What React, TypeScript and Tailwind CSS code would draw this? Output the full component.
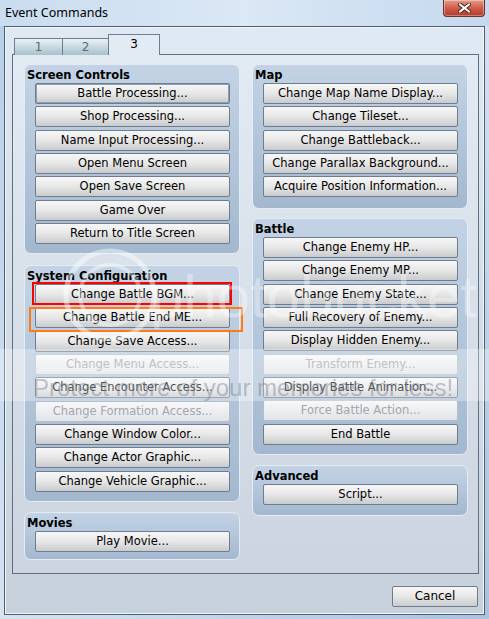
import React from "react";

type Btn = { label: string; off?: boolean; focus?: boolean };

const screenControls: Btn[] = [
  { label: "Battle Processing...", focus: true },
  { label: "Shop Processing..." },
  { label: "Name Input Processing..." },
  { label: "Open Menu Screen" },
  { label: "Open Save Screen" },
  { label: "Game Over" },
  { label: "Return to Title Screen" },
];

const systemConfig: Btn[] = [
  { label: "Change Battle BGM..." },
  { label: "Change Battle End ME..." },
  { label: "Change Save Access..." },
  { label: "Change Menu Access...", off: true },
  { label: "Change Encounter Access..." },
  { label: "Change Formation Access...", off: true },
  { label: "Change Window Color..." },
  { label: "Change Actor Graphic..." },
  { label: "Change Vehicle Graphic..." },
];

const mapCmds: Btn[] = [
  { label: "Change Map Name Display..." },
  { label: "Change Tileset..." },
  { label: "Change Battleback..." },
  { label: "Change Parallax Background..." },
  { label: "Acquire Position Information..." },
];

const battleCmds: Btn[] = [
  { label: "Change Enemy HP..." },
  { label: "Change Enemy MP..." },
  { label: "Change Enemy State..." },
  { label: "Full Recovery of Enemy..." },
  { label: "Display Hidden Enemy..." },
  { label: "Transform Enemy...", off: true },
  { label: "Display Battle Animation..." },
  { label: "Force Battle Action...", off: true },
  { label: "End Battle" },
];

const CmdButton: React.FC<{ b: Btn }> = ({ b }) => {
  const base =
    "h-[21px] w-full shrink-0 rounded-[2px] border text-center text-[11.5px] leading-[19px] whitespace-nowrap bg-gradient-to-b";
  if (b.off) {
    return (
      <div className={`${base} border-[#b4bfcc] from-[#f8f8f8] to-[#e1e4e8] text-[#a2a7ad]`}>
        {b.label}
      </div>
    );
  }
  return (
    <div
      className={`${base} border-[#6f7c8d] from-[#f7f7f7] via-[#e7e7e7] to-[#c9cbce] text-black ${
        b.focus ? "shadow-[inset_0_0_0_1px_#8c9fb6]" : ""
      }`}
    >
      {b.label}
    </div>
  );
};

const Group: React.FC<{ title: string; h: string; items: Btn[] }> = ({ title, h, items }) => (
  <div
    className={`${h} shrink-0 rounded-[7px] border border-[#e3ebf4] bg-gradient-to-b from-[#c3d3e5] to-[#a3b8cf] pl-[10px] pr-[9px] pt-[3px]`}
  >
    <div className="-ml-[8px] h-[15px] text-[11.5px] font-bold leading-[15px] text-black">{title}</div>
    <div className="flex flex-col gap-[2.35px]">
      {items.map((b) => (
        <CmdButton key={b.label} b={b} />
      ))}
    </div>
  </div>
);

export default function App() {
  return (
    <div
      className="relative h-[619px] w-[489px] overflow-hidden bg-gradient-to-br from-[#b7cfe9] via-[#d5e3f2] to-[#a9c3df]"
      style={{ fontFamily: '"DejaVu Sans", Verdana, sans-serif' }}
    >
      {/* title bar */}
      <div className="flex h-[26px] items-start justify-between bg-gradient-to-r from-[#c9dcf0] via-[#dbe8f5] to-[#c4d8ee]">
        <span
          className="ml-[5px] mt-[5px] text-[12.5px] leading-[16px] text-black"
          style={{ fontFamily: '"Noto Sans", "Open Sans", sans-serif' }}
        >
          Event Commands
        </span>
        <div className="mr-[4px] flex h-[17px] w-[42px] items-center justify-center rounded-b-[4px] border border-t-0 border-[#6e3129] bg-gradient-to-b from-[#e59a8a] via-[#cf5d4b] to-[#b5362a] shadow-[inset_0_0_0_1px_rgba(255,255,255,0.35)]">
          <svg width="13" height="10" viewBox="0 0 13 10">
            <path d="M2 1.5 L11 8.5 M11 1.5 L2 8.5" stroke="#4a2320" strokeWidth="4" strokeLinecap="square" />
            <path d="M2 1.5 L11 8.5 M11 1.5 L2 8.5" stroke="#ffffff" strokeWidth="2" strokeLinecap="square" />
          </svg>
        </div>
      </div>

      {/* client area */}
      <div className="mx-[4px] flex h-[589px] flex-col border border-[#4e5d70] bg-gradient-to-b from-[#dfe9f4] to-[#c7d1db] shadow-[inset_0_0_0_1px_#f3f7fb]">
        {/* tabs */}
        <div className="relative z-10 ml-[9px] mt-[7px] flex h-[20px] items-end">
          <div className="-mb-px flex h-[17px] w-[49px] items-center justify-center border border-b-0 border-[#6d7d92] bg-gradient-to-b from-[#e9f1f5] to-[#a7c2cb] text-[12px] text-[#5e6a74]">
            1
          </div>
          <div className="-mb-px -ml-px flex h-[17px] w-[47px] items-center justify-center border border-b-0 border-[#6d7d92] bg-gradient-to-b from-[#e9f1f5] to-[#a7c2cb] text-[12px] text-[#5e6a74]">
            2
          </div>
          <div className="-mb-px -ml-px flex h-[21px] w-[52px] items-center justify-center border border-b-0 border-[#6d7d92] bg-[#e2eaf3] pb-[2px] text-[12px] text-black">
            3
          </div>
        </div>

        {/* tab panel */}
        <div className="ml-[7px] mr-[5px] flex h-[520px] gap-[12px] border border-[#5f6e82] bg-gradient-to-b from-[#e2eaf3] to-[#ccd5df] pl-[11px] pr-[10px] pt-[9px]">
          <div className="flex w-[216px] flex-col">
            <Group title="Screen Controls" h="h-[190px]" items={screenControls} />
            <div className="mt-[11px]">
              <Group title="System Configuration" h="h-[237px]" items={systemConfig} />
            </div>
            <div className="mt-[10px]">
              <Group title="Movies" h="h-[48px]" items={[{ label: "Play Movie..." }]} />
            </div>
          </div>
          <div className="flex w-[216px] flex-col">
            <Group title="Map" h="h-[145px]" items={mapCmds} />
            <div className="mt-[9px]">
              <Group title="Battle" h="h-[237px]" items={battleCmds} />
            </div>
            <div className="mt-[10px]">
              <Group title="Advanced" h="h-[51px]" items={[{ label: "Script..." }]} />
            </div>
          </div>
        </div>

        {/* footer */}
        <div className="mr-[6px] mt-[12px] flex justify-end">
          <div className="h-[21px] w-[86px] rounded-[2px] border border-[#6f7c8d] bg-gradient-to-b from-[#f7f7f7] via-[#e7e7e7] to-[#c9cbce] text-center text-[12px] leading-[19px] text-black">
            Cancel
          </div>
        </div>
      </div>

      {/* highlight boxes drawn over the screenshot */}
      <div className="pointer-events-none absolute left-[32px] top-[282px] h-[23px] w-[200px] border-2 border-[#ff0000]" />
      <div className="pointer-events-none absolute left-[29px] top-[307px] h-[25px] w-[214px] border-2 border-[#ff7a14]" />

      {/* watermark */}
      <div className="pointer-events-none absolute left-0 top-[349px] h-[52px] w-full bg-white/30" />
      <svg className="pointer-events-none absolute left-[60px] top-[245px]" width="100" height="100" viewBox="0 0 100 100">
        <circle cx="50" cy="50" r="44" fill="none" stroke="rgba(255,255,255,0.45)" strokeWidth="5" />
        <circle cx="50" cy="50" r="30" fill="none" stroke="rgba(255,255,255,0.4)" strokeWidth="4" />
      </svg>
      <div
        className="pointer-events-none absolute left-[150px] top-[262px] text-[60px] leading-[70px] text-white/35"
        style={{ fontFamily: '"Liberation Sans", Arial, sans-serif' }}
      >
        photobucket
      </div>
      <div
        className="pointer-events-none absolute left-[33px] top-[374px] whitespace-nowrap text-[24px] leading-[28px] text-[#6f7f90]/45"
        style={{ fontFamily: '"Liberation Sans", Arial, sans-serif' }}
      >
        Protect more of your memories for less!
      </div>
    </div>
  );
}
